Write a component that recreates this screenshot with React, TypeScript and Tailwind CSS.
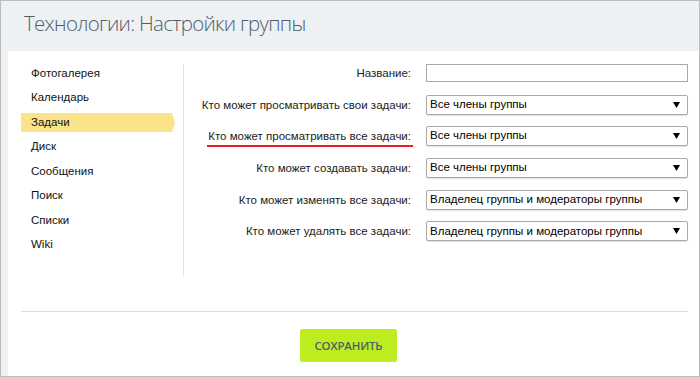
import { FC } from "react";

const menu = ["Фотогалерея", "Календарь", "Задачи", "Диск", "Сообщения", "Поиск", "Списки", "Wiki"];

const rows: { label: string; value?: string; marked?: boolean }[] = [
  { label: "Название:" },
  { label: "Кто может просматривать свои задачи:", value: "Все члены группы" },
  { label: "Кто может просматривать все задачи:", value: "Все члены группы", marked: true },
  { label: "Кто может создавать задачи:", value: "Все члены группы" },
  { label: "Кто может изменять все задачи:", value: "Владелец группы и модераторы группы" },
  { label: "Кто может удалять все задачи:", value: "Владелец группы и модераторы группы" },
];

const Select: FC<{ value: string }> = ({ value }) => (
  <div className="flex h-[20px] w-[262px] items-center justify-between rounded-[2px] border border-[#a9a9a9] bg-white pl-[3px] pr-[7px] shadow-[0_1px_1px_rgba(0,0,0,0.12)]">
    <span className="text-[11.5px] leading-none text-black">{value}</span>
    <svg width="7" height="6" viewBox="0 0 7 6">
      <path d="M0 0h7L3.5 6z" fill="#000" />
    </svg>
  </div>
);

const App: FC = () => {
  return (
    <div className="flex h-[377px] w-[700px] flex-col border border-[#bcbcbc] bg-[#edf1f4] font-['Liberation_Sans',Arial,sans-serif]">
      <div className="flex h-[50px] shrink-0 items-center pl-[23px] pb-[5px] font-['Open_Sans',sans-serif] text-[20.5px] font-light tracking-[-0.7px] text-[#535c69]">
        Технологии: Настройки группы
      </div>
      <div className="ml-[7px] flex flex-1 flex-col bg-white">
        <div className="flex">
          <div className="mt-[13px] h-[212px] w-[176px] shrink-0 border-r border-[#e3e3e3] pl-[13px]">
            <div className="flex flex-col gap-[5.5px]">
              {menu.map((item) =>
                item === "Задачи" ? (
                  <div key={item} className="relative flex h-[19px] w-[150px] items-center bg-[#fbe38a] pl-[10px] text-[11.5px] text-[#111]">
                    {item}
                    <svg className="absolute right-[-4px] top-0" width="4" height="19" viewBox="0 0 4 19">
                      <path d="M0 0h1l3 9.5-3 9.5H0z" fill="#fbe38a" />
                    </svg>
                  </div>
                ) : (
                  <div key={item} className="flex h-[19px] items-center pl-[10px] text-[11.5px] text-[#111]">
                    {item}
                  </div>
                )
              )}
            </div>
          </div>
          <div className="flex-1 pt-[6px] pr-[11px]">
            {rows.map((row) => (
              <div key={row.label} className="flex h-[31.7px] items-center">
                <div className="flex flex-1 justify-end whitespace-nowrap pr-[15px] text-[11.5px] text-[#222]">
                  <span className="relative leading-[14px]">
                    {row.label}
                    {row.marked && <span className="absolute left-[-1px] right-[-2px] top-full mt-[2px] h-[2px] bg-[#f21b1b]" />}
                  </span>
                </div>
                {row.value ? (
                  <Select value={row.value} />
                ) : (
                  <div className="h-[18px] w-[262px] border border-[#a9a9a9] bg-white" />
                )}
              </div>
            ))}
          </div>
        </div>
        <div className="ml-[13px] mr-[11px] mt-[35px] border-t border-[#dcdcdc] pt-[17px]">
          <button className="ml-[279px] flex h-[33px] w-[97px] items-center justify-center rounded-[2px] bg-[#bbed21] font-['Open_Sans',sans-serif] text-[11.5px] font-semibold uppercase tracking-[-0.2px] text-[#535c69]">
            Сохранить
          </button>
        </div>
      </div>
    </div>
  );
};

export default App;
